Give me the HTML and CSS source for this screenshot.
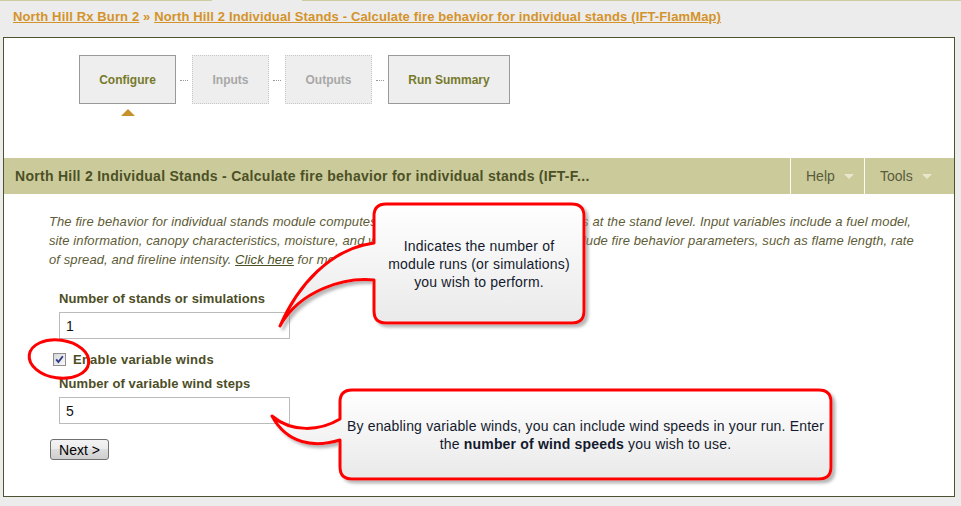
FILE: index.html
```html
<!DOCTYPE html>
<html lang="en">
<head>
<meta charset="utf-8">
<title>North Hill 2 Individual Stands</title>
<link rel="stylesheet" href="styles.css">
</head>
<body>
<div class="topline"><span class="seg-a"></span><span class="seg-gap"></span><span class="seg-b"></span></div>
<div class="crumbs"><a href="#">North Hill Rx Burn 2</a> » <a href="#">North Hill 2 Individual Stands - Calculate fire behavior for individual stands (IFT-FlamMap)</a></div>
<div class="panel">
  <div class="steps">
    <div class="step-col">
      <div class="step on w-config">Configure</div>
      <div class="caret"></div>
    </div>
    <div class="conn"></div>
    <div class="step off w-inputs">Inputs</div>
    <div class="conn"></div>
    <div class="step off w-outputs">Outputs</div>
    <div class="conn"></div>
    <div class="step on w-run">Run Summary</div>
  </div>
  <div class="bar">
    <div class="bar-title">North Hill 2 Individual Stands - Calculate fire behavior for individual stands (IFT-F...</div>
    <div class="menu help">Help<span class="arrow"></span></div>
    <div class="menu tools">Tools<span class="arrow"></span></div>
  </div>
  <div class="content">
    <p class="desc">The fire behavior for individual stands module computes surface fire behavior characteristics at the stand level. Input variables include a fuel model, site information, canopy characteristics, moisture, and wind conditions. Output variables include fire behavior parameters, such as flame length, rate of spread, and fireline intensity. <a href="#">Click here</a> for more information.</p>
    <div class="form">
      <div class="field-label">Number of stands or simulations</div>
      <input class="text-input" type="text" value="1">
      <label class="check-row"><span class="cb"><svg width="11" height="11" viewBox="0 0 11 11"><path d="M2.2 5.4 L4.4 8 L8.8 2.2" fill="none" stroke="#2f3a8a" stroke-width="1.9"/></svg></span>Enable variable winds</label>
      <div class="field-label second">Number of variable wind steps</div>
      <input class="text-input" type="text" value="5">
      <button class="next" type="button">Next &gt;</button>
    </div>
  </div>
</div>

<svg class="overlay" width="961" height="506" viewBox="0 0 961 506">
  <defs>
    <linearGradient id="cg" x1="0" y1="0" x2="0" y2="1">
      <stop offset="0" stop-color="#ffffff"/>
      <stop offset="1" stop-color="#e9e9e9"/>
    </linearGradient>
    <filter id="sh" x="-10%" y="-10%" width="130%" height="130%">
      <feDropShadow dx="3" dy="3" stdDeviation="1.5" flood-color="#888" flood-opacity="0.6"/>
    </filter>
  </defs>
  <path filter="url(#sh)" fill="url(#cg)" stroke="#ff0000" stroke-width="3" stroke-linejoin="round"
    d="M386 204 H572 Q584 204 584 216 V311 Q584 323 572 323 H386 Q374 323 374 311 V280 C345 277 300 290 280 326 C298 285 330 249 374 243 V216 Q374 204 386 204 Z"/>
  <path filter="url(#sh)" fill="url(#cg)" stroke="#ff0000" stroke-width="3" stroke-linejoin="round"
    d="M352 390 H819 Q831 390 831 402 V467 Q831 479 819 479 H352 Q340 479 340 467 V440 C314 448 287 444 272 416 C292 433 320 431 340 419 V402 Q340 390 352 390 Z"/>
  <ellipse cx="59" cy="359" rx="30" ry="19" transform="rotate(8 59 359)" fill="none" stroke="#ff0000" stroke-width="3"/>
</svg>
<div class="callout c1"><div class="callout-text">Indicates the number of<br>module runs (or simulations)<br>you wish to perform.</div></div>
<div class="callout c2"><div class="callout-text">By enabling variable winds, you can include wind speeds in your run. Enter<br>the <b>number of wind speeds</b> you wish to use.</div></div>
</body>
</html>
```
FILE: styles.css
```css
* { box-sizing: border-box; }

body {
  margin: 0;
  width: 961px;
  height: 506px;
  position: relative;
  overflow: hidden;
  background: #ececec;
  font-family: "Liberation Sans", Arial, sans-serif;
}

.topline { display: flex; height: 1px; }
.topline .seg-a { width: 212px; background: #cfcd9f; }
.topline .seg-gap { width: 90px; }
.topline .seg-b { flex: 1; background: #cfcd9f; }

.crumbs {
  height: 23px;
  padding: 8px 13px 0;
  font-size: 13px;
  font-weight: bold;
  line-height: 15px;
  letter-spacing: 0.14px;
  color: #d4932a;
  white-space: nowrap;
}
.crumbs a { color: #d4932a; text-decoration: underline; }

.panel {
  margin: 13px 0 0 3px;
  width: 952px;
  height: 460px;
  border: 1px solid #4d5330;
  background: #fff;
}

.steps {
  display: flex;
  align-items: flex-start;
  height: 120px;
  padding: 17px 0 0 75px;
}
.step-col { display: flex; flex-direction: column; align-items: center; }
.step {
  height: 49px;
  padding-top: 1px;
  display: flex;
  align-items: center;
  justify-content: center;
  font-size: 12px;
  font-weight: bold;
  background: #eeeeee;
}
.step.on { border: 1px solid #999; color: #767a2a; }
.step.off { border: 1px dotted #c8c8c8; color: #a8a8a8; }
.w-config { width: 97px; }
.w-inputs { width: 77px; }
.w-outputs { width: 87px; }
.w-run { width: 122px; }
.caret {
  margin-top: 5px;
  width: 0;
  height: 0;
  border-left: 7px solid transparent;
  border-right: 7px solid transparent;
  border-bottom: 7px solid #c8922a;
}
.conn {
  width: 8px;
  margin: 25px 4px 0;
  border-top: 1px dotted #9a9a9a;
}

.bar {
  display: flex;
  height: 36px;
  background: #cbca9b;
}
.bar-title {
  flex: 1;
  display: flex;
  align-items: center;
  padding-left: 11px;
  font-size: 14px;
  font-weight: bold;
  letter-spacing: 0.28px;
  color: #4b5125;
  white-space: nowrap;
}
.menu {
  display: flex;
  align-items: center;
  padding-left: 15px;
  border-left: 1px solid #fbfbf0;
  font-size: 14px;
  color: #585c3c;
}
.menu.help { width: 74px; }
.menu.tools { width: 90px; }
.menu .arrow {
  margin-left: 9px;
  width: 0;
  height: 0;
  border-left: 5px solid transparent;
  border-right: 5px solid transparent;
  border-top: 5px solid #e8e6cb;
}

.content { padding: 18px 0 0 45px; }
.desc {
  margin: 0;
  width: 870px;
  font-size: 13px;
  font-style: italic;
  line-height: 19px;
  letter-spacing: 0.1px;
  color: #5e5c36;
}
.desc a { color: #4b5125; text-decoration: underline; }

.form { padding-left: 10px; }
.field-label {
  margin-top: 22px;
  font-size: 13px;
  font-weight: bold;
  line-height: 16px;
  letter-spacing: 0.1px;
  color: #4d4d26;
}
.field-label.second { margin-top: 9px; }
.text-input {
  display: block;
  margin: 5px 0 0;
  width: 231px;
  height: 27px;
  padding: 0 6px;
  border: 1px solid #bbbbbb;
  background: #fff;
  font-family: "Liberation Sans", Arial, sans-serif;
  font-size: 14px;
  color: #111;
  outline: none;
}
.check-row {
  display: flex;
  align-items: center;
  height: 16px;
  margin: 12px 0 0 -6px;
  font-size: 13px;
  font-weight: bold;
  letter-spacing: 0.24px;
  color: #4d4d26;
}
.cb {
  display: flex;
  align-items: center;
  justify-content: center;
  width: 13px;
  height: 13px;
  margin-right: 7px;
  border: 1px solid #8f8f8f;
  background: linear-gradient(135deg, #d8d8d8, #f8f8f8);
}
.cb svg { display: block; }
.next {
  display: block;
  margin: 15px 0 0 -9px;
  width: 59px;
  height: 21px;
  padding: 0;
  border: 1px solid #707070;
  border-radius: 3px;
  background: linear-gradient(#f3f3f3, #ebebeb 50%, #dddddd 50%, #cfcfcf);
  font-family: "Liberation Sans", Arial, sans-serif;
  font-size: 14px;
  color: #000;
}

.overlay {
  position: absolute;
  left: 0;
  top: 0;
  pointer-events: none;
}
.callout {
  position: absolute;
  display: flex;
  align-items: center;
  justify-content: center;
}
.callout-text {
  text-align: center;
  white-space: nowrap;
  font-size: 14px;
  line-height: 18px;
  letter-spacing: 0.18px;
  color: #141a2e;
}
.callout.c1 { left: 374px; top: 204px; width: 210px; height: 119px; }
.callout.c2 { left: 340px; top: 390px; width: 491px; height: 89px; }
```
